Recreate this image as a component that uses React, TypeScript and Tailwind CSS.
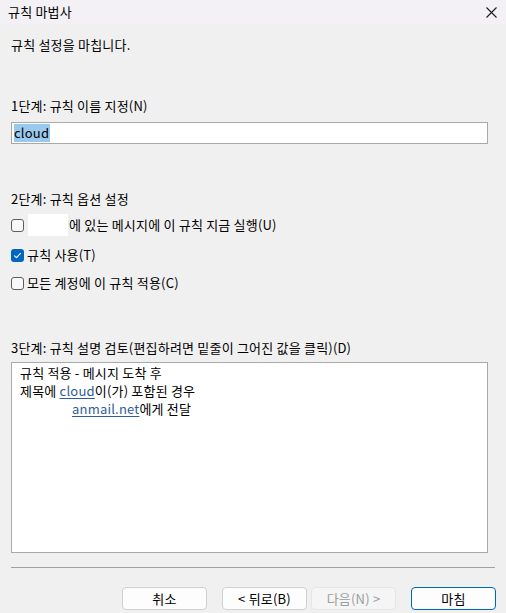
import React from "react";

function Box({ checked = false }: { checked?: boolean }) {
  if (checked) {
    return (
      <span className="inline-flex h-[13px] w-[13px] shrink-0 items-center justify-center rounded-[3px] bg-[#0067c0]">
        <svg width="9" height="9" viewBox="0 0 9 9" fill="none">
          <path d="M1.5 4.8 L3.5 6.7 L7.5 2.3" stroke="#fff" strokeWidth="1.1" strokeLinecap="round" strokeLinejoin="round" />
        </svg>
      </span>
    );
  }
  return <span className="inline-block h-[13px] w-[13px] shrink-0 rounded-[3px] border border-[#5d5d5d] bg-[#f8f8f8]" />;
}

function Btn({
  children,
  kind = "normal",
}: {
  children: React.ReactNode;
  kind?: "normal" | "disabled" | "primary";
}) {
  const styles = {
    normal: "border-[#d0d0d0] bg-[#fdfdfd] text-black",
    disabled: "border-[#e6e6e6] bg-[#f5f5f5] text-[#9d9d9d]",
    primary: "border-[#0067c0] bg-[#fdfdfd] text-black",
  };
  return (
    <div className={`flex h-[23px] w-[85px] items-center justify-center rounded-[4px] border ${styles[kind]}`}>
      {children}
    </div>
  );
}

export default function App() {
  return (
    <div
      className="h-[613px] w-[506px] overflow-hidden bg-[#f0f0f0] text-[13px] leading-[16px] tracking-[0.2px] text-black"
      style={{ fontFamily: '"Noto Sans CJK KR", "Noto Sans", sans-serif' }}
    >
      {/* 타이틀 바 */}
      <div className="flex h-[24px] items-center justify-between bg-[#f3f0f6] pl-[8px] pr-[9px]">
        <span>규칙 마법사</span>
        <svg width="11" height="11" viewBox="0 0 11 11" fill="none">
          <path d="M0.5 0.5 L10.5 10.5 M10.5 0.5 L0.5 10.5" stroke="#1a1a1a" strokeWidth="1.1" />
        </svg>
      </div>

      <div className="px-[11px]">
        <p className="mt-[13px]">규칙 설정을 마칩니다.</p>

        <p className="mt-[45px]">1단계: 규칙 이름 지정(N)</p>
        <div className="mt-[8px] flex h-[22px] w-[477px] items-center border border-[#a9a9a9] bg-white px-[2px]">
          <span className="bg-[#99c9ef] pr-[1px] leading-[18px]">cloud</span>
        </div>

        <p className="mt-[47px]">2단계: 규칙 옵션 설정</p>
        <div className="mt-[7px] flex h-[22px] items-center">
          <Box />
          <span className="ml-[4px] h-[22px] w-[40px] bg-white" />
          <span className="ml-[1px]">에 있는 메시지에 이 규칙 지금 실행(U)</span>
        </div>
        <div className="mt-[9px] flex h-[20px] items-center gap-[3px]">
          <Box checked />
          <span>규칙 사용(T)</span>
        </div>
        <div className="mt-[8px] flex h-[20px] items-center gap-[3px]">
          <Box />
          <span>모든 계정에 이 규칙 적용(C)</span>
        </div>

        <p className="mt-[47px]">3단계: 규칙 설명 검토(편집하려면 밑줄이 그어진 값을 클릭)(D)</p>
        <div className="mt-[6px] h-[191px] w-[477px] border border-[#a9a9a9] bg-white px-[8px] pt-[1px] leading-[18px]">
          <p>규칙 적용 - 메시지 도착 후</p>
          <p>
            제목에 <span className="text-[#2f5d97] underline underline-offset-2">cloud</span>이(가) 포함된 경우
          </p>
          <p className="pl-[52px]">
            <span className="text-[#2f5d97] underline underline-offset-2">anmail.net</span>에게 전달
          </p>
        </div>

        <div className="mt-[14px] h-px w-[484px] bg-[#a0a0a0]" />

        <div className="mt-[19px] flex w-[485px] justify-end">
          <Btn>취소</Btn>
          <div className="ml-[15px] flex gap-[4px]">
            <Btn>&lt; 뒤로(B)</Btn>
            <Btn kind="disabled">다음(N) &gt;</Btn>
          </div>
          <div className="ml-[15px]">
            <Btn kind="primary">마침</Btn>
          </div>
        </div>
      </div>
    </div>
  );
}
